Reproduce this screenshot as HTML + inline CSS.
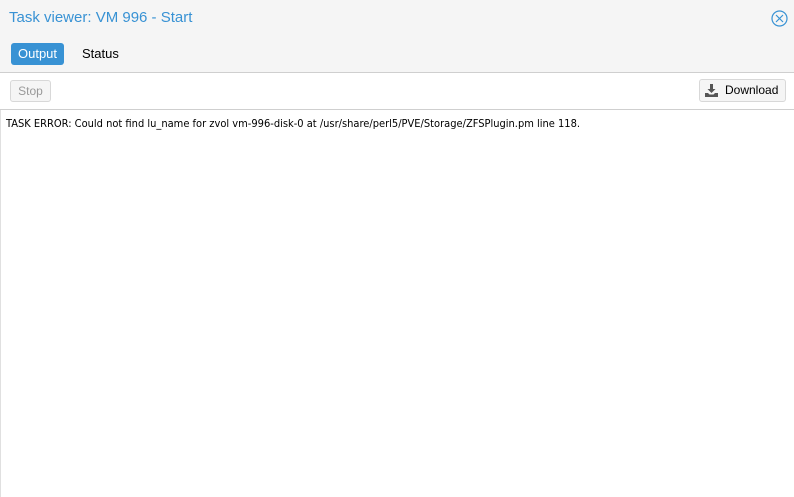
<!DOCTYPE html>
<html><head><style>
body{margin:0;width:794px;height:497px;overflow:hidden;background:#fff;font-family:"Liberation Sans",Arial,sans-serif;position:relative}
.hdr{position:absolute;left:0;top:0;width:794px;height:72px;background:#f5f5f5;border-bottom:1px solid #cfcfcf}
.title{position:absolute;left:9px;top:9px;font-size:15px;color:#3892d4}
.tab{position:absolute;top:43px;height:22px;line-height:22px;font-size:13px;padding:0 7px;border-radius:3px}
.tb{position:absolute;left:0;top:73px;width:794px;height:36px;border-bottom:1px solid #cfcfcf}
.btn{position:absolute;border:1px solid #d8d8d8;border-radius:3px;background:#f5f5f5;font-size:12px;box-sizing:border-box}
.log{position:absolute;left:6px;top:117px;font-size:11px;color:#000;font-family:"DejaVu Sans Condensed","Liberation Sans",sans-serif}
</style></head><body>
<div class="hdr">
<div class="title">Task viewer: VM 996 - Start</div>
<svg style="position:absolute;left:771px;top:10px" width="17" height="17" viewBox="0 0 17 17"><circle cx="8.5" cy="8.5" r="7.5" fill="none" stroke="#3892d4" stroke-width="1.2"/><path d="M5 5L12 12M12 5L5 12" stroke="#3892d4" stroke-width="1.2"/></svg>
<div class="tab" style="left:11px;width:39px;background:#3892d4;color:#fff">Output</div>
<div class="tab" style="left:75px;color:#000">Status</div>
</div>
<div class="tb">
<div class="btn" style="left:10px;top:7px;width:41px;height:22px;line-height:20px;text-align:center;color:#999">Stop</div>
<div class="btn" style="left:699px;top:6px;width:87px;height:23px;line-height:21px;color:#000;padding-left:25px">Download
<svg style="position:absolute;left:5px;top:4px" width="13" height="13" viewBox="0 0 13 13"><path d="M5 0h3v5h2.5L6.5 9 2.5 5H5z" fill="#555"/><path d="M0 9h3l1.5 1.5h4L10 9h3v4H0z" fill="#555"/></svg></div>
</div>
<div style="position:absolute;left:0;top:110px;width:1px;height:387px;background:#e0e0e0"></div>
<div class="log">TASK ERROR: Could not find lu_name for zvol vm-996-disk-0 at /usr/share/perl5/PVE/Storage/ZFSPlugin.pm line 118.</div>
</body></html>
